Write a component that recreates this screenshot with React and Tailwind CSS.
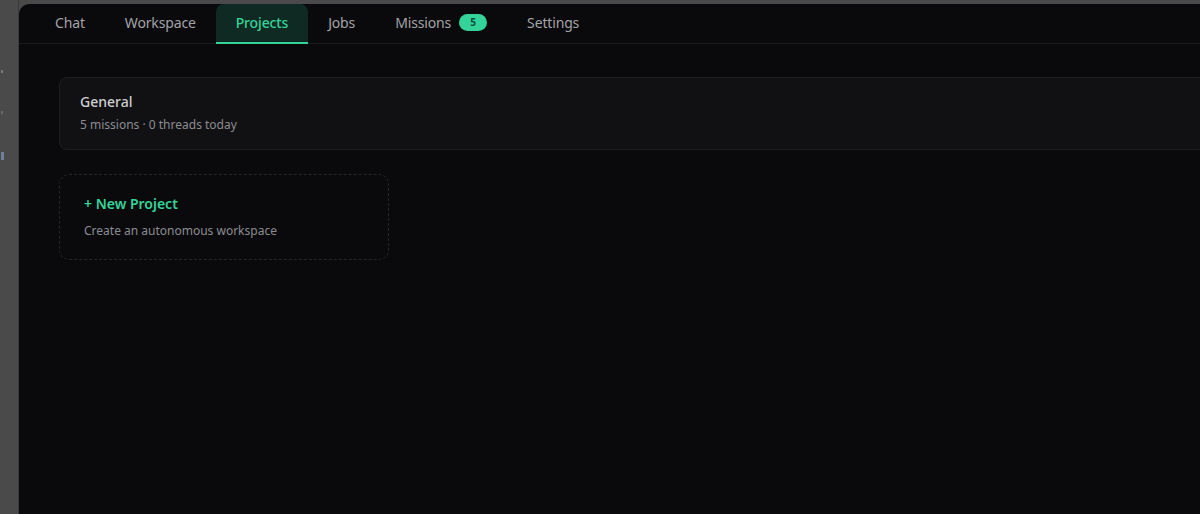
import React from 'react';

const tabs = [
  { label: 'Chat' },
  { label: 'Workspace' },
  { label: 'Projects', active: true },
  { label: 'Jobs' },
  { label: 'Missions', badge: 5 },
  { label: 'Settings' },
];

const projects = [
  { name: 'General', missions: 5, threads: 0 },
];

export default function App() {
  return (
    <div
      className="h-[514px] w-[1200px] overflow-hidden bg-[#4a4a4a] flex"
      style={{ fontFamily: '"Noto Sans", "Open Sans", sans-serif' }}
    >
      {/* host window edge */}
      <div className="w-[19px] shrink-0 border-r border-[#3a3a3a] flex flex-col items-start gap-[38px] pt-[70px] pl-[1px]">
        <span className="h-[3px] w-[2px] bg-[#7a7a7a]" />
        <span className="h-[3px] w-[2px] bg-[#6a6a6a]" />
        <span className="h-[8px] w-[3px] bg-[#6f7f9a]" />
      </div>

      <div className="mt-[4px] w-[1240px] shrink-0 rounded-tl-[10px] bg-[#0a0a0c] flex flex-col">
        {/* tab bar */}
        <nav className="flex h-[40px] items-stretch border-b border-[#1b1b1e] pl-4 tracking-[-0.15px]">
          {tabs.map((t) => (
            <div
              key={t.label}
              className={
                t.active
                  ? 'relative flex items-center px-5 pb-[3px] rounded-t-[8px] bg-[#0f2a22] text-[14px] font-medium text-[#34d399]'
                  : 'relative flex items-center px-5 pb-[3px] text-[14px] text-[#a3a3a8]'
              }
            >
              <span>{t.label}</span>
              {t.badge != null && (
                <span className="ml-2 flex h-[17px] w-[28px] items-center justify-center rounded-full bg-[#34d399] text-[10px] font-bold text-[#064e3b]">
                  {t.badge}
                </span>
              )}
              {t.active && (
                <span className="absolute bottom-[-1px] left-0 right-0 h-[2px] bg-[#34d399]" />
              )}
            </div>
          ))}
        </nav>

        {/* project list */}
        <main className="pt-[33px] pl-10">
          {projects.map((p) => (
            <div
              key={p.name}
              className="mb-[24px] rounded-[8px] border border-[#1f1f22] bg-[#111113] px-5 pt-[14px] pb-[15px]"
            >
              <div className="text-[14px] font-medium leading-5 text-[#cfcfd2]">{p.name}</div>
              <div className="mt-1 text-[12px] leading-[18px] text-[#8c8c91]">
                {p.missions} missions · {p.threads} threads today
              </div>
            </div>
          ))}

          <div className="w-[330px] rounded-[10px] border border-dashed border-[#25252a] px-6 pt-[19px] pb-[19px]">
            <div className="text-[14px] font-semibold leading-5 text-[#34d399]">+ New Project</div>
            <div className="mt-2 text-[12px] leading-[18px] text-[#8c8c91]">
              Create an autonomous workspace
            </div>
          </div>
        </main>
      </div>
    </div>
  );
}
